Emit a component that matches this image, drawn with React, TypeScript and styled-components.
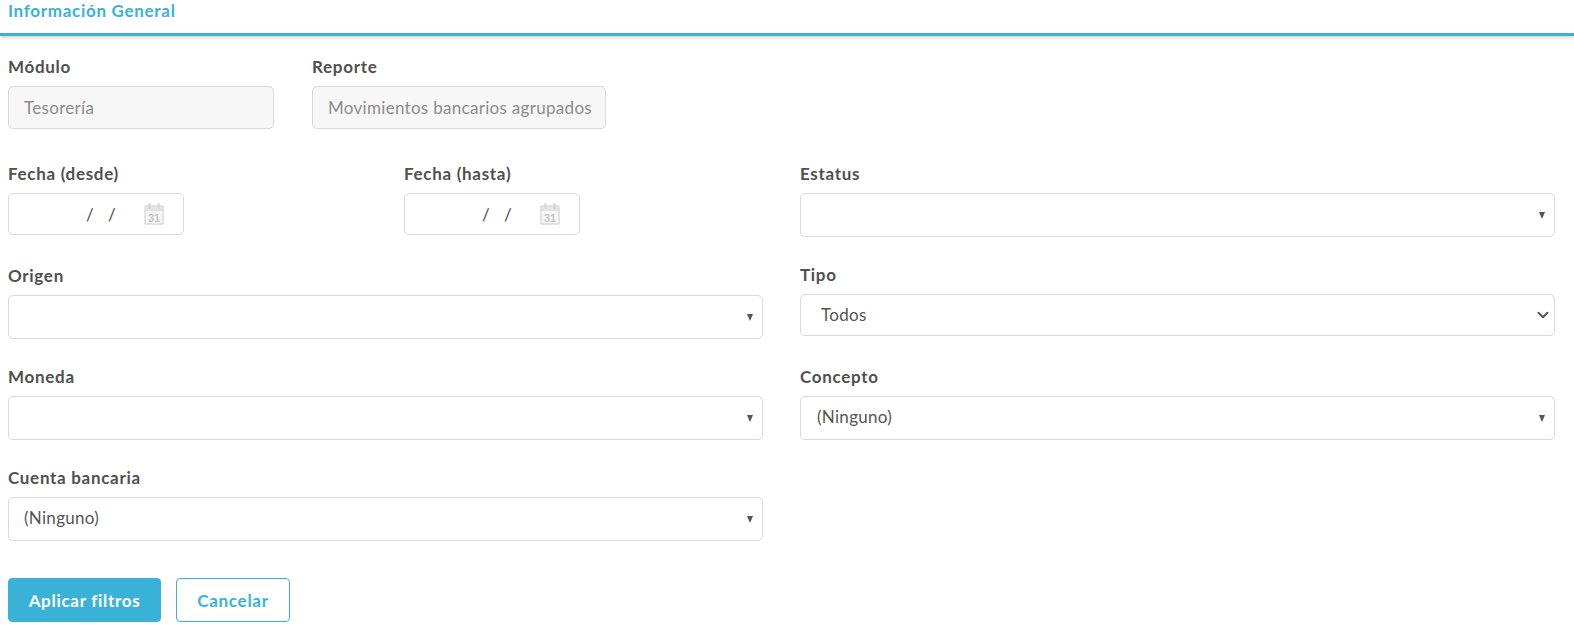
import { FC, ReactNode } from 'react';
import styled, { createGlobalStyle } from 'styled-components';
import { ChevronDown } from 'lucide-react';

const GlobalStyle = createGlobalStyle`
  html, body {
    margin: 0;
    padding: 0;
    background: #fff;
    font-family: Lato, "Noto Sans", sans-serif;
    font-size: 17px;
    letter-spacing: 0.3px;
    color: #4d4d4d;
  }
  * {
    box-sizing: border-box;
  }
`;

const BLUE = '#3ab2d8';

const CalendarIcon: FC = () => (
  <svg width="20" height="22" viewBox="0 0 20 22" fill="none">
    <rect x="0" y="2" width="20" height="20" rx="2" fill="#e3e3e3" />
    <rect x="2" y="8" width="16" height="12" fill="#f6f6f6" />
    <rect x="4.5" y="0" width="2" height="6" rx="1" fill="#d2d2d2" />
    <rect x="13.5" y="0" width="2" height="6" rx="1" fill="#d2d2d2" />
    <text x="10" y="18.5" textAnchor="middle" fontSize="11" fontWeight="700" fill="#c6c6c6" fontFamily="Liberation Sans, sans-serif" letterSpacing="0">
      31
    </text>
  </svg>
);

const Field: FC<{ label: string; children: ReactNode }> = ({ label, children }) => (
  <SField>
    <SLabel>{label}</SLabel>
    {children}
  </SField>
);

const DateField: FC<{ label: string }> = ({ label }) => (
  <Field label={label}>
    <SDate>
      <SSlashes>
        <span>/</span>
        <span>/</span>
      </SSlashes>
      <CalendarIcon />
    </SDate>
  </Field>
);

const Select2: FC<{ label: string; value?: string; padded?: boolean }> = ({ label, value, padded }) => (
  <Field label={label}>
    <SCombo $padded={padded}>
      <SComboText>{value}</SComboText>
      <SCaret />
    </SCombo>
  </Field>
);

export default function App() {
  return (
    <>
      <GlobalStyle />
      <SHeader>
        <STitle>Información General</STitle>
      </SHeader>
      <SForm>
        <STopRow>
          <STopCell $width={266}>
            <Field label="Módulo">
              <SDisabled>Tesorería</SDisabled>
            </Field>
          </STopCell>
          <STopCell $width={294}>
            <Field label="Reporte">
              <SDisabled>Movimientos bancarios agrupados</SDisabled>
            </Field>
          </STopCell>
        </STopRow>
        <SGrid>
          <SDateRow>
            <DateField label="Fecha (desde)" />
            <DateField label="Fecha (hasta)" />
          </SDateRow>
          <Select2 label="Estatus" />
          <Select2 label="Origen" />
          <STipo>
            <Field label="Tipo">
              <SNativeWrap>
                <SNative defaultValue="Todos">
                  <option>Todos</option>
                </SNative>
                <SChevron>
                  <ChevronDown size={18} strokeWidth={2.6} />
                </SChevron>
              </SNativeWrap>
            </Field>
          </STipo>
          <Select2 label="Moneda" />
          <Select2 label="Concepto" value="(Ninguno)" />
          <Select2 label="Cuenta bancaria" value="(Ninguno)" padded />
        </SGrid>
        <SActions>
          <SPrimary>Aplicar filtros</SPrimary>
          <SSecondary>Cancelar</SSecondary>
        </SActions>
      </SForm>
    </>
  );
}

const SHeader = styled.div`
  height: 36px;
  padding: 0 8px;
  border-bottom: 3px solid ${BLUE};
  box-shadow: 0 2px 3px rgba(0, 0, 0, 0.15);
`;

const STitle = styled.h4`
  margin: 0;
  font-size: 17px;
  font-weight: 700;
  line-height: 21px;
  letter-spacing: 0.7px;
  color: ${BLUE};
`;

const SForm = styled.div`
  padding: 19px 18px 0 8px;
`;

const STopRow = styled.div`
  display: flex;
  gap: 38px;
  margin-bottom: 33px;
`;

const STopCell = styled.div<{ $width: number }>`
  width: ${(p) => p.$width}px;
`;

const SGrid = styled.div`
  display: grid;
  grid-template-columns: 755px 755px;
  column-gap: 37px;
  row-gap: 26px;
`;

const SDateRow = styled.div`
  display: grid;
  grid-template-columns: 176px 176px;
  column-gap: 220px;
  margin-bottom: 3px;
`;

const SField = styled.div`
  display: flex;
  flex-direction: column;
`;

const STipo = styled.div`
  margin-top: -1px;
`;

const SLabel = styled.label`
  height: 20px;
  margin-top: 2px;
  margin-bottom: 9px;
  font-size: 17px;
  font-weight: 700;
  line-height: 20px;
  letter-spacing: 0.7px;
  color: #505050;
`;

const SBox = styled.div`
  border: 1px solid #d9d9d9;
  border-radius: 5px;
  background: #fff;
`;

const SDisabled = styled(SBox)`
  display: flex;
  align-items: center;
  height: 43px;
  padding: 0 15px;
  background: #f7f7f7;
  color: #8c8c8c;
  white-space: nowrap;
`;

const SDate = styled(SBox)`
  display: flex;
  align-items: center;
  justify-content: flex-end;
  height: 42px;
  padding-right: 19px;
  gap: 28px;
`;

const SSlashes = styled.span`
  display: flex;
  gap: 14px;
  color: #4d4d4d;
`;

const SCombo = styled(SBox)<{ $padded?: boolean }>`
  display: flex;
  align-items: center;
  justify-content: space-between;
  height: 44px;
  padding: 0 9px 0 ${(p) => (p.$padded ? 15 : 16)}px;
`;

const SComboText = styled.span`
  margin-bottom: 3px;
  color: #555;
`;

const SCaret = styled.span`
  width: 0;
  height: 0;
  border-left: 3.5px solid transparent;
  border-right: 3.5px solid transparent;
  border-top: 7px solid #555;
`;

const SNativeWrap = styled.div`
  position: relative;
  display: flex;
`;

const SNative = styled.select`
  appearance: none;
  width: 100%;
  height: 42px;
  padding: 0 20px 1px;
  border: 1px solid #d9d9d9;
  border-radius: 5px;
  background: #fff;
  font: inherit;
  letter-spacing: inherit;
  color: #555;
`;

const SChevron = styled.span`
  position: absolute;
  top: 12px;
  right: 3px;
  display: flex;
  color: #555;
  pointer-events: none;
`;

const SActions = styled.div`
  display: flex;
  gap: 15px;
  margin-top: 37px;
`;

const SPrimary = styled.button`
  width: 153px;
  height: 44px;
  border: 1px solid ${BLUE};
  border-radius: 4px;
  background: ${BLUE};
  color: #fff;
  font: inherit;
  font-weight: 700;
  letter-spacing: 0.7px;
`;

const SSecondary = styled.button`
  width: 114px;
  height: 44px;
  border: 1px solid ${BLUE};
  border-radius: 4px;
  background: #fff;
  color: ${BLUE};
  font: inherit;
  font-weight: 700;
  letter-spacing: 0.7px;
`;
